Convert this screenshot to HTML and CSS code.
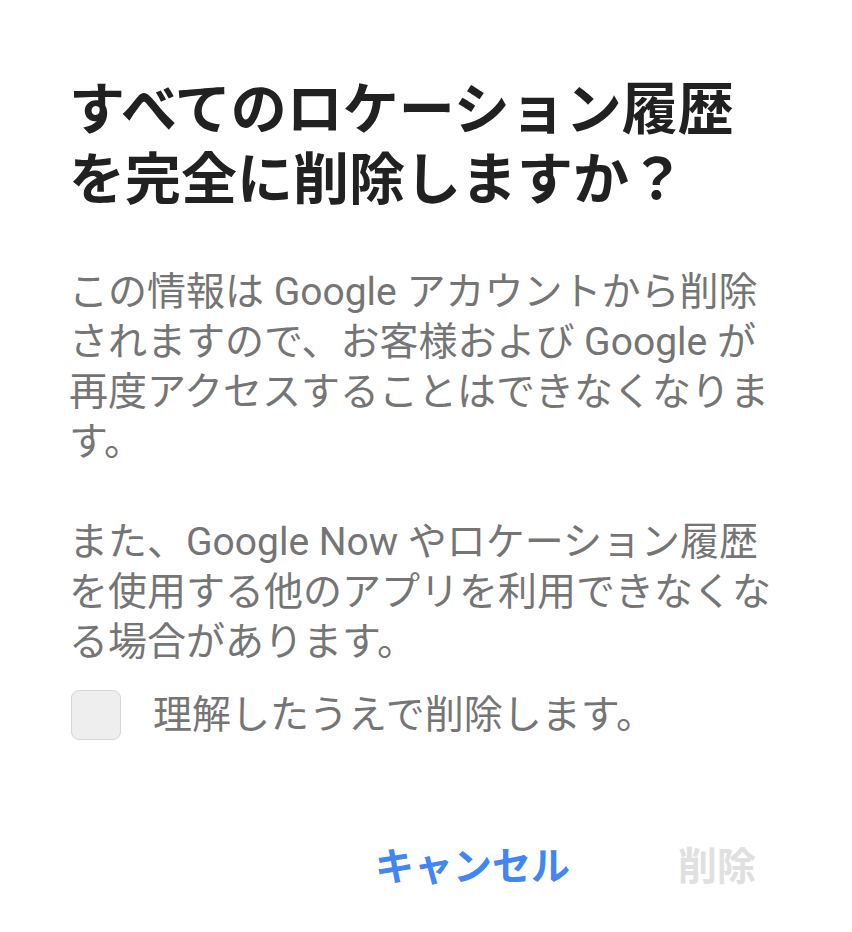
FILE: index.html
```html
<!DOCTYPE html>
<html lang="ja">
<head>
<meta charset="utf-8">
<link rel="stylesheet" href="styles.css">
</head>
<body>
<div class="dialog">
  <h1 class="title">すべてのロケーション履歴を完全に削除しますか？</h1>
  <p class="text">この情報は Google アカウントから削除されますので、お客様および Google が再度アクセスすることはできなくなります。</p>
  <p class="text">また、Google Now やロケーション履歴を使用する他のアプリを利用できなくなる場合があります。</p>
  <label class="check">
    <span class="box"></span>
    <span class="check-label">理解したうえで削除します。</span>
  </label>
  <div class="actions">
    <span class="btn btn-cancel">キャンセル</span>
    <span class="btn btn-delete">削除</span>
  </div>
</div>
</body>
</html>
```
FILE: styles.css
```css
html, body {
  margin: 0;
  padding: 0;
  background: #ffffff;
}
.dialog {
  width: 852px;
  height: 932px;
  box-sizing: border-box;
  padding: 75px 66px 0 69px;
  font-family: Roboto, "Noto Sans CJK JP", sans-serif;
}
.title {
  margin: 0;
  font-size: 56px;
  line-height: 70px;
  font-weight: 700;
  color: #212121;
  width: 690px;
}
.text {
  margin: 0;
  font-size: 39px;
  line-height: 50px;
  color: #757575;
  font-weight: 400;
}
.text .latin {
  font-size: 41px;
}
.title + .text {
  margin-top: 52px;
}
.text + .text {
  margin-top: 50px;
}
.check {
  display: flex;
  align-items: center;
  gap: 32px;
  margin-top: 23px;
  padding-left: 2px;
}
.box {
  width: 50px;
  height: 50px;
  box-sizing: border-box;
  border: 1.5px solid #d6d6d6;
  border-radius: 8px;
  background: #eeeeee;
  flex: none;
}
.check-label {
  font-size: 39px;
  line-height: 50px;
  color: #757575;
}
.actions {
  display: flex;
  justify-content: flex-end;
  gap: 108px;
  margin-top: 102px;
  padding-right: 30px;
}
.btn {
  font-size: 39px;
  line-height: 50px;
  font-weight: 700;
}
.btn-cancel {
  color: #4285f4;
}
.btn-delete {
  color: #e0e0e0;
}
```
